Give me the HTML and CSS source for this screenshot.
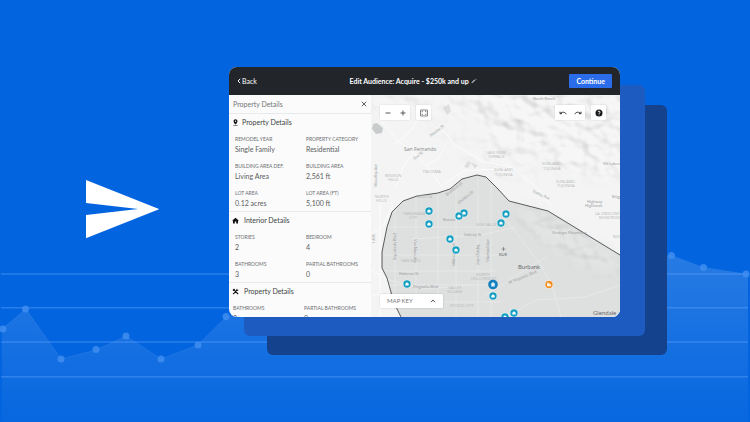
FILE: index.html
```html
<!DOCTYPE html>
<html lang="en">
<head>
<meta charset="utf-8">
<meta name="viewport" content="width=device-width, initial-scale=1">
<title>Edit Audience</title>
<link rel="stylesheet" href="styles.css">
</head>
<body>
<svg class="chart" viewBox="0 0 750 422" preserveAspectRatio="xMidYMid slice" aria-hidden="true">
  <defs>
    <linearGradient id="area" x1="0" y1="250" x2="0" y2="422" gradientUnits="userSpaceOnUse">
      <stop offset="0" stop-color="#fff" stop-opacity=".15"/>
      <stop offset="1" stop-color="#fff" stop-opacity=".02"/>
    </linearGradient>
  </defs>
  <path fill="url(#area)" d="M2 422V329L26 309L61 359L96 350L126 336L161 359L198 345L226 317L300 290L560 270L671 255L703 267L748 274V422Z"/>
  <path fill="none" stroke="#fff" stroke-opacity=".07" d="M2 329L26 309L61 359L96 350L126 336L161 359L198 345L226 317"/>
  <path fill="none" stroke="#69a8ff" stroke-opacity=".38" stroke-width="1.4" d="M1 274H748M1 307.700H748M1 342H748M1 376.700H748"/>
  <g fill="#3f8df0" fill-opacity=".85">
    <circle cx="3" cy="329" r="3.500"/><circle cx="25.500" cy="309" r="3.500"/><circle cx="61" cy="359" r="3.500"/>
    <circle cx="96" cy="349.500" r="3.500"/><circle cx="126" cy="336" r="3.500"/><circle cx="161" cy="359" r="3.500"/>
    <circle cx="198" cy="345" r="3.500"/><circle cx="226" cy="316.500" r="3.500"/><circle cx="671.500" cy="255.500" r="3.500"/>
    <circle cx="703.500" cy="267.500" r="3.500"/><circle cx="746" cy="274" r="3.500"/>
  </g>
</svg>

<main class="stage">
  <svg class="plane" viewBox="0 0 73 58" aria-hidden="true"><path fill="#fff" d="M0 0L73 29L0 58V35L52 29L0 23Z"/></svg>

  <div class="stack">
    <section class="window">
      <header class="bar">
        <a class="back" href="#"><svg viewBox="0 0 4 6" aria-hidden="true"><path d="M3.200.8L1 3l2.200 2.200"/></svg>Back</a>
        <h1 class="title">Edit Audience: Acquire - $250k and up
          <svg viewBox="0 0 6 6" aria-hidden="true"><path d="M.9 5.100L1.300 4.100L3.800 1.600M1.500 4.700L4.200 2M4.600.9L5.200 1.500"/></svg>
        </h1>
        <button class="continue" type="button">Continue</button>
      </header>

      <div class="content">
        <aside class="panel">
          <div class="panel-top">
            <span>Property Details</span>
            <button class="close" type="button" aria-label="Close"><svg viewBox="0 0 6 6" aria-hidden="true"><path d="M.7.7L5.300 5.300M5.300.7L.7 5.300"/></svg></button>
          </div>

          <section class="group">
            <h2><svg viewBox="0 0 8 8" aria-hidden="true"><path fill-rule="evenodd" d="M4 .2A2.300 2.300 0 0 1 6.300 2.500C6.300 4 4 6.300 4 6.300S1.700 4 1.700 2.500A2.300 2.300 0 0 1 4 .2ZM4 1.700A.8.8 0 1 0 4 3.300A.8.800 0 0 0 4 1.700ZM1.500 7H6.500V7.800H1.500Z"/></svg>Property Details</h2>
            <dl>
              <div><dt>REMODEL YEAR</dt><dd>Single Family</dd></div>
              <div><dt>PROPERTY CATEGORY</dt><dd>Residential</dd></div>
              <div><dt>BUILDING AREA DEF.</dt><dd>Living Area</dd></div>
              <div><dt>BUILDING AREA</dt><dd>2,561 ft</dd></div>
              <div><dt>LOT AREA</dt><dd>0.12 acres</dd></div>
              <div><dt>LOT AREA (FT)</dt><dd>5,100 ft</dd></div>
            </dl>
          </section>

          <section class="group wide-icon">
            <h2><svg viewBox="0 0 8 8" aria-hidden="true"><path d="M4 .8L7.900 4.400H6.900V7.500H4.800V5.200H3.200V7.500H1.100V4.400H.1Z"/></svg>Interior Details</h2>
            <dl>
              <div><dt>STORIES</dt><dd>2</dd></div>
              <div><dt>BEDROOM</dt><dd>4</dd></div>
              <div><dt>BATHROOMS</dt><dd>3</dd></div>
              <div><dt>PARTIAL BATHROOMS</dt><dd>0</dd></div>
            </dl>
          </section>

          <section class="group wide-icon outdent">
            <h2><svg viewBox="0 0 8 8" aria-hidden="true"><path d="M.6 2.200L2 .9L3.600 1.200L3 2L7.400 6.400L6.500 7.300L2.300 3L1.500 3.500ZM5.200 1.200L6 .8L5.900 2.100L7.200 2L7 3L5.700 3.500L1.700 7.400L.8 6.500L4.800 2.600Z"/></svg>Property Details</h2>
            <dl>
              <div><dt>BATHROOMS</dt><dd>2</dd></div>
              <div><dt>PARTIAL BATHROOMS</dt><dd>0</dd></div>
            </dl>
          </section>
        </aside>

        <div class="map">
          <svg class="map-canvas" viewBox="0 0 249 222" preserveAspectRatio="xMidYMid slice" role="img" aria-label="Map of Burbank and San Fernando">
            <defs>
              <filter id="relief" x="0" y="0" width="100%" height="100%" color-interpolation-filters="sRGB">
                <feTurbulence type="fractalNoise" baseFrequency=".06 .07" numOctaves="2" seed="11"/>
                <feColorMatrix values="0 0 0 0 0  0 0 0 0 0  0 0 0 0 0  1 0 0 0 0"/>
                <feDiffuseLighting surfaceScale="4" diffuseConstant="1.13" lighting-color="#fff"><feDistantLight azimuth="315" elevation="58"/></feDiffuseLighting>
              </filter>
              <filter id="soft" x="-20%" y="-20%" width="140%" height="140%"><feGaussianBlur stdDeviation="7"/></filter>
              <mask id="hills">
                <g fill="#fff" filter="url(#soft)">
                  <path fill-opacity=".24" d="M90-15H270V85L205 80L165 58L120 45Z"/>
                  <path fill-opacity=".12" d="M-10-10H100L110 30L60 22L20 15L-10 25Z"/>
                  <path fill-opacity=".16" d="M140 110L178 118L249 160V180L215 172L180 152L155 132Z"/>
                  <path fill-opacity=".1" d="M40 30L160 60L170 85L120 80Z"/>
                </g>
              </mask>
              <g id="pin"><circle r="4.200" fill="#fff" fill-opacity=".8"/><circle r="3.700" fill="#159fc0"/><path fill="#fff" d="M0-1.800L1.700-.3V1.500H-1.700V-.3Z"/></g>
            </defs>
            <rect width="249" height="222" fill="#f3f4f3"/>
            <path fill="#dedfdf" d="M30 222L23 208L18 190L16 183L11 173V157L16 132L21 117L32 106L46 101L67 98L79 94L91 84L106 80L115 82L127 94L138 106L177 116L249 160V222Z"/>
            <rect width="249" height="222" filter="url(#relief)" mask="url(#hills)"/>
            <g fill="none" stroke="#fff" stroke-opacity=".7">
              <path d="M0 12L16 33L27 46L42 57L56 71L70 91M22 50L38 38L47 24M42 57L32 72L25 92M55 70L67 64L75 50M65 26L83 49L110 66L140 72L165 92L182 113M70 91L92 76L140 73M9 105L9 222M0 140L12 130L22 110M0 175L18 185M0 200H28"/>
            </g>
            <g fill="none" stroke="#ebebeb" stroke-width=".7">
              <path d="M24 108V215M45 103V215M67 99V215M85 92V222M107 84V222M120 90V222M16 132H125M12 160H126M12 176H124M18 190H124M26 207H130M127 115L170 170L182 194L190 222M134 222L165 205L215 202L249 190M18 185L53 194L100 190M110 203L175 162M40 144L110 140L145 132"/>
            </g>
            <g fill="#c9cccc">
              <path d="M2 29L6 28L12 33L11 38L5 39L1 34Z"/>
              <path fill-opacity=".5" d="M72 13L78 9L80 16L76 20ZM93 72L97 66L100 68L97 73ZM100 68L107 70L104 74Z"/>
            </g>
            <path fill="none" stroke="#484b4d" stroke-width=".9" d="M30 222L23 208L18 190L16 183L11 173V157L16 132L21 117L32 106L46 101L67 98L79 94L91 84L106 80L115 82L127 94L138 106L177 116L249 160"/>

            <g class="places">
              <text class="town" x="33" y="56">San Fernando</text>
              <text class="dark" x="147" y="174">Burbank</text>
              <text class="dark" x="222" y="220">Glendale</text>
              <text class="dark small" x="128" y="161">BUR</text>
            </g>
            <path stroke="#777" stroke-width=".7" d="M132.500 152V156M130.500 154H134.500"/>
            <g class="areas">
              <text x="14" y="82">MISSION</text><text x="17" y="86">HILLS</text>
              <text x="52" y="78">PACOIMA</text>
              <text x="4" y="103">NORTH</text><text x="5" y="107">HILLS</text>
              <text x="47" y="103">ARLETA</text>
              <text x="32" y="120">PANORAMA</text><text x="38" y="124">CITY</text>
              <text x="30" y="167">VAN NUYS</text>
              <text x="105" y="131">SUN VALLEY</text>
              <text x="105" y="181">NORTH</text><text x="100" y="185">HOLLYWOOD</text>
              <text x="77" y="194">VALLEY</text><text x="76" y="198">VILLAGE</text>
              <text x="79" y="212">STUDIO CITY</text>
              <text x="115" y="59">LAKE VIEW</text><text x="117" y="63">TERRACE</text>
              <text x="123" y="76">SUNLAND-</text><text x="124" y="81">TUJUNGA</text>
              <text x="171" y="70">SUNLAND-</text><text x="172" y="75">TUJUNGA</text>
              <text x="185" y="88">SUNLAND-</text><text x="186" y="92">TUJUNGA</text>
              <text x="224" y="120">LA CRESCENTA</text><text x="228" y="124">MONTROSE</text>
              <text x="242" y="143">MONTROSE</text>
            </g>
            <g class="roads">
              <text x="162" y="5">North Ranch</text>
              <text x="232" y="70">Mt Lukens</text>
              <text x="216" y="108">Highway</text><text x="214" y="112">Highlands</text>
              <text x="241" y="103">Briggs</text>
              <text x="181" y="139">Verdugo Mountains</text>
              <text transform="translate(60 42) rotate(-38)">Maclay St</text>
              <text transform="translate(44 65) rotate(-40)">Fox St</text>
              <text transform="translate(161 97) rotate(25)">Tuxley Ave</text>
              <text transform="translate(88 109) rotate(-38)">Sheldon St</text>
              <text transform="translate(76 101) rotate(-38)">Branford St</text>
              <text x="72" y="126">Roscoe</text>
              <text x="93" y="141">Saticoy St</text>
              <text x="28" y="180">Hatteras St</text>
              <text x="42" y="193">Magnolia Blvd</text>
              <text transform="translate(138 189) rotate(-22)">W Magnolia Blvd</text>
              <text transform="translate(6 92) rotate(-90)">Woodley Ave</text>
              <text transform="translate(25 165) rotate(-90)">Sepulveda Blvd</text>
              <text transform="translate(43 144) rotate(90)">Van Nuys Ave</text>
              <text transform="translate(84 171) rotate(-90)">Whitsett Ave</text>
              <text transform="translate(106 149) rotate(90)">Tujunga Ave</text>
              <text transform="translate(118 167) rotate(-90)">Vineland Ave</text>
              <text transform="translate(4 148) rotate(-90)">I 405</text>
            </g>

            <use href="#pin" x="58" y="116"/><use href="#pin" x="58" y="129"/>
            <use href="#pin" x="93" y="118"/><use href="#pin" x="88" y="121"/>
            <use href="#pin" x="79" y="144"/><use href="#pin" x="85" y="155"/>
            <use href="#pin" x="36" y="189"/><use href="#pin" x="122" y="201"/>
            <use href="#pin" x="135" y="119"/><use href="#pin" x="130" y="128"/>
            <use href="#pin" x="134" y="222"/><use href="#pin" x="143" y="218"/>
            <g transform="translate(122 189.500)"><circle r="4.800" fill="#147fbd"/><path fill="#d9effa" d="M0-2.500L2.500-.2H1.800V2H-1.800V-.2H-2.500Z"/></g>
            <g transform="translate(178 189.500)"><circle r="4.200" fill="#fff" fill-opacity=".8"/><circle r="3.700" fill="#f28f22"/><path fill="#fff" d="M-1.800-1.800H.3V-.3H1.900V1.800H-1.800ZM-1.100-1.100V-.6H-.4V-1.100ZM.5.400V.9H1.200V.4Z"/></g>
          </svg>

          <div class="tools">
            <div class="tool-set">
              <button type="button" aria-label="Zoom out"><svg viewBox="0 0 8 8" aria-hidden="true"><path d="M1.500 4H6.500"/></svg></button>
              <button type="button" aria-label="Zoom in"><svg viewBox="0 0 8 8" aria-hidden="true"><path d="M1.500 4H6.500M4 1.500V6.500"/></svg></button>
            </div>
            <div class="tool-set">
              <button type="button" aria-label="Fit to screen"><svg class="thin" viewBox="0 0 8 8" aria-hidden="true"><path d="M.5 1H7.500V7H.5ZM2 3.300V2.400H3M5 2.400H6V3.300M6 4.700V5.600H5M3 5.600H2V4.700"/></svg></button>
            </div>
            <div class="tool-set push">
              <button type="button" aria-label="Undo"><svg class="bold" viewBox="0 0 8 8" aria-hidden="true"><path d="M1 2.700V4.700H3M1.200 4.500C3 2.700 6 2.700 7.200 5.200"/></svg></button>
              <button type="button" aria-label="Redo"><svg class="bold" viewBox="0 0 8 8" aria-hidden="true"><path d="M7 2.700V4.700H5M6.800 4.500C5 2.700 2 2.700.8 5.200"/></svg></button>
            </div>
            <div class="tool-set">
              <button type="button" aria-label="Help"><svg viewBox="0 0 8 8" aria-hidden="true"><circle cx="4" cy="4" r="3.500" fill="#15181b" stroke="none"/><path class="light" d="M2.900 3.100C3 1.700 5.200 1.900 5.100 3.200C5 3.900 4 3.900 4 4.800M4 5.500V6.200"/></svg></button>
            </div>
          </div>

          <button class="map-key" type="button">MAP KEY<svg viewBox="0 0 6 6" aria-hidden="true"><path d="M1 4.200L3 2L5 4.200"/></svg></button>
        </div>
      </div>
    </section>
  </div>
</main>
</body>
</html>
```

FILE: styles.css
```css
* {
  box-sizing: border-box;
}

body {
  margin: 0;
  min-height: 100vh;
  overflow: hidden;
  background: #0264df;
  color: #5a5d60;
  font-family: Lato, "Liberation Sans", sans-serif;
  font-size: 7px;
  line-height: 10px;
}

button {
  border: 0;
  padding: 0;
  background: none;
  color: inherit;
  font: inherit;
}

svg {
  display: block;
}

h1,
h2,
dl,
dd {
  margin: 0;
  font: inherit;
}

.chart {
  position: absolute;
  inset: 0;
  width: 100%;
  height: 100%;
}

.stage {
  position: relative;
  display: grid;
  grid-template-columns: 229fr 391fr 130fr;
  align-items: start;
  padding-top: 67px;
}

.plane {
  width: 32%;
  margin: 113px auto 0 86px;
}

/* Application window with two offset cards behind it */
.stack {
  position: relative;
}

.stack::before,
.stack::after {
  content: "";
  position: absolute;
  border-radius: 6px;
}

.stack::before {
  inset: 38px -47px -38px 38px;
  background: #14428c;
}

.stack::after {
  inset: 18px -25px -19px 15px;
  background: #1d5bc0;
}

.window {
  position: relative;
  z-index: 1;
  display: flex;
  flex-direction: column;
  aspect-ratio: 391 / 250;
  overflow: hidden;
  border-radius: 8px;
  background: #fbfbfb;
}

.bar {
  display: flex;
  align-items: center;
  justify-content: space-between;
  height: 28px;
  flex: none;
  padding: 0 8px;
  background: #22262b;
  color: #fff;
}

.back {
  display: flex;
  align-items: center;
  gap: 1px;
  color: inherit;
  text-decoration: none;
}

.back svg {
  width: 4px;
  height: 6px;
}

.bar svg {
  fill: none;
  stroke: #fff;
}

.title {
  display: flex;
  align-items: center;
  gap: 2px;
  font-weight: 700;
}

.title svg {
  width: 6px;
  height: 6px;
  stroke-width: 1;
  opacity: .7;
}

.continue {
  padding: 2px 7px;
  border-radius: 1px;
  background: #2b6ceb;
  font-weight: 700;
}

.content {
  display: flex;
  flex: 1;
  min-height: 0;
}

.panel {
  flex: 142 1 0;
  min-width: 0;
  overflow: hidden;
}

.panel-top {
  display: flex;
  align-items: center;
  justify-content: space-between;
  height: 18px;
  padding: 0 4px;
  color: #727578;
}

.close svg {
  width: 6px;
  height: 6px;
  stroke: #5a5d60;
  stroke-width: 1;
}

.group {
  border-top: 1px solid #e8e9ea;
}

.group h2 {
  display: flex;
  align-items: center;
  gap: 3px;
  height: 16px;
  padding-left: 3px;
  color: #3c3f42;
}

.group h2 svg {
  width: 7px;
  height: 7px;
  fill: #111;
}

.wide-icon h2 {
  gap: 5px;
}

.group dl {
  display: grid;
  grid-template-columns: 1fr 1fr;
  gap: 8px 0;
  padding: 5px 0 3px 6px;
  margin-right: -6px;
}

.outdent dl {
  padding-left: 4px;
  margin-right: -4px;
}

dt {
  color: #6b6e71;
  font-size: 5px;
  line-height: 9px;
  white-space: nowrap;
}

.map {
  position: relative;
  flex: 249 1 0;
  min-width: 0;
}

.map-canvas {
  position: absolute;
  inset: 0;
  width: 100%;
  height: 100%;
}

.places {
  font-size: 6px;
  fill: #85888a;
}

.places .town {
  font-family: "Open Sans", sans-serif;
  font-size: 5px;
}

.places .dark {
  fill: #6a6d70;
}

.places .small {
  font-size: 4px;
}

.areas {
  font-family: "Open Sans", sans-serif;
  font-size: 4px;
  fill: #b6b8b9;
}

.roads {
  font-size: 4px;
  fill: #a0a2a4;
}

.tools {
  position: relative;
  display: flex;
  gap: 6px;
  padding: 10px 14px 0 9px;
}

.tool-set {
  display: flex;
  border-radius: 1px;
  background: #fff;
  box-shadow: 0 0 2px #0002;
}

.push {
  margin-left: auto;
}

.tool-set button {
  display: grid;
  place-items: center;
  width: 15px;
  height: 15px;
}

.tool-set svg {
  width: 8px;
  height: 8px;
  fill: none;
  stroke: #55585b;
  stroke-width: 1;
}

.tool-set .thin {
  stroke-width: .7;
}

.tool-set .bold {
  stroke: #303336;
}

.tool-set .light {
  stroke: #fff;
}

.map-key {
  position: absolute;
  left: 9px;
  bottom: 9px;
  display: flex;
  align-items: center;
  justify-content: space-between;
  width: 63px;
  height: 14px;
  padding: 0 7px;
  border-radius: 1px;
  background: #fff;
  color: #777a7c;
  font-size: 6px;
  box-shadow: 0 0 2px #0003;
}

.map-key svg {
  width: 6px;
  height: 6px;
  fill: none;
  stroke: #55585b;
  stroke-width: 1;
}
```
